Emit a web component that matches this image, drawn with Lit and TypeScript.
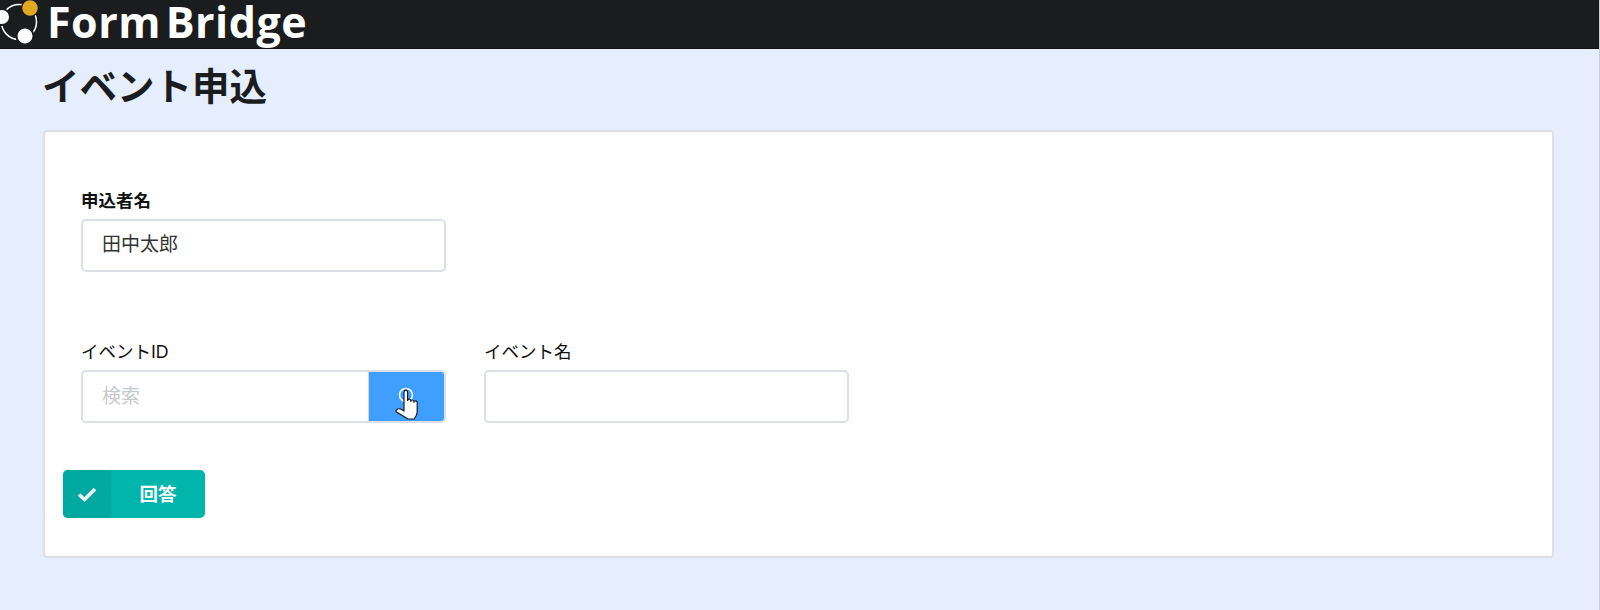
import { LitElement, html, css } from "lit";
import { customElement } from "lit/decorators.js";

@customElement("app-root")
export class AppRoot extends LitElement {
  static styles = css`
    :host {
      display: block;
      height: 610px;
      overflow: hidden;
      background: #e6eefe;
      border-right: 1px solid #c9ccd2;
      box-sizing: border-box;
      font-family: "Liberation Sans", "Noto Sans CJK JP", sans-serif;
      color: #1b1c1e;
    }
    .header {
      height: 49px;
      box-sizing: border-box;
      background: #1b1c1e;
      display: flex;
      align-items: flex-start;
      gap: 9px;
      border-bottom: 1px solid #111;
    }
    .logo {
      flex: none;
      display: block;
    }
    .brand {
      font-family: "Open Sans", "Noto Sans", sans-serif;
      font-size: 43px;
      font-weight: 700;
      line-height: 44px;
      color: #fff;
      letter-spacing: 0.5px;
      word-spacing: -7px;
    }
    .main {
      padding: 0 45px 0 43px;
    }
    .title {
      margin: 0 0 0 -1px;
      height: 81px;
      display: flex;
      align-items: center;
      font-size: 37.5px;
      font-weight: 700;
      line-height: 1;
      padding-bottom: 3px;
      box-sizing: border-box;
    }
    .card {
      height: 428px;
      box-sizing: border-box;
      background: #fff;
      border: 2px solid #dcdfe5;
      border-radius: 4px;
      padding: 59px 36px 0 36px;
    }
    .row {
      display: flex;
      gap: 38px;
    }
    .row + .row {
      margin-top: 70px;
    }
    .field {
      width: 365px;
    }
    .label {
      font-size: 17.5px;
      line-height: 20px;
      height: 20px;
      margin-bottom: 8px;
      color: #111;
    }
    .label.bold {
      font-weight: 700;
    }
    .box {
      display: flex;
      height: 53px;
      box-sizing: border-box;
      border: 2px solid #dcdfe5;
      border-radius: 5px;
      overflow: hidden;
      background: #fff;
    }
    .value {
      flex: 1;
      padding-left: 19px;
      font-size: 19px;
      line-height: 47px;
      color: #333;
    }
    .value.placeholder {
      line-height: 49px;
      color: #c6c9cc;
    }
    .pick {
      position: relative;
      flex: none;
      width: 76px;
      background: #3f9fff;
      border-left: 1px solid #cfd6e0;
      box-sizing: border-box;
    }
    .pick svg {
      position: absolute;
      left: 26px;
      top: 14px;
    }
    .submit {
      display: flex;
      width: 142px;
      height: 48px;
      margin: 47px 0 0 -18px;
      border-radius: 5px;
      overflow: hidden;
      background: #00b5ac;
      color: #fff;
      font-size: 18.5px;
      font-weight: 700;
    }
    .submit .check {
      flex: none;
      width: 48px;
      background: #00a9a0;
      display: flex;
      align-items: center;
      justify-content: center;
    }
    .submit .text {
      flex: 1;
      display: flex;
      align-items: center;
      justify-content: center;
      padding-bottom: 2px;
    }
  `;

  render() {
    return html`
      <div class="header">
        <svg class="logo" width="38" height="48" viewBox="0 0 38 48">
          <circle cx="19" cy="22" r="17.500" fill="none" stroke="#fff" stroke-width="1.500" />
          <circle cx="2" cy="17" r="8" fill="#fff" stroke="#1b1c1e" stroke-width="2" />
          <circle cx="25" cy="36" r="8.500" fill="#fff" stroke="#1b1c1e" stroke-width="2" />
          <circle cx="30" cy="8" r="8.500" fill="#e3a822" stroke="#1b1c1e" stroke-width="1.500" />
        </svg>
        <div class="brand">Form Bridge</div>
      </div>
      <div class="main">
        <h1 class="title">イベント申込</h1>
        <div class="card">
          <div class="row">
            <div class="field">
              <div class="label bold">申込者名</div>
              <div class="box"><div class="value">田中太郎</div></div>
            </div>
          </div>
          <div class="row">
            <div class="field">
              <div class="label">イベントID</div>
              <div class="box">
                <div class="value placeholder">検索</div>
                <div class="pick">
                  <svg width="26" height="36" viewBox="0 0 26 36">
                    <circle cx="11" cy="9" r="6.500" fill="none" stroke="#fff" stroke-width="1.500" />
                    <path
                      d="M9 6 a1.800 1.800 0 0 1 3.600 0 V14.500 a1.600 1.600 0 0 1 3.200 .3 v.7 a1.600 1.600 0 0 1 3.200 .2 v.6 a1.600 1.600 0 0 1 3.200 .4 V26 c0 3 -1.500 5 -3 7 H13 L1.500 26 c-1.500 -1.500 1 -4 4 -3 L9 25 Z"
                      fill="#fff"
                      stroke="#1b1c1e"
                      stroke-width="1.200"
                      stroke-linejoin="round"
                    />
                  </svg>
                </div>
              </div>
            </div>
            <div class="field">
              <div class="label">イベント名</div>
              <div class="box"><div class="value"></div></div>
            </div>
          </div>
          <div class="submit">
            <div class="check">
              <svg width="20" height="16" viewBox="0 0 20 16">
                <path d="M2 8.500 L7.500 13.500 L18 3" fill="none" stroke="#edf3fb" stroke-width="3.600" />
              </svg>
            </div>
            <div class="text">回答</div>
          </div>
        </div>
      </div>
    `;
  }
}
